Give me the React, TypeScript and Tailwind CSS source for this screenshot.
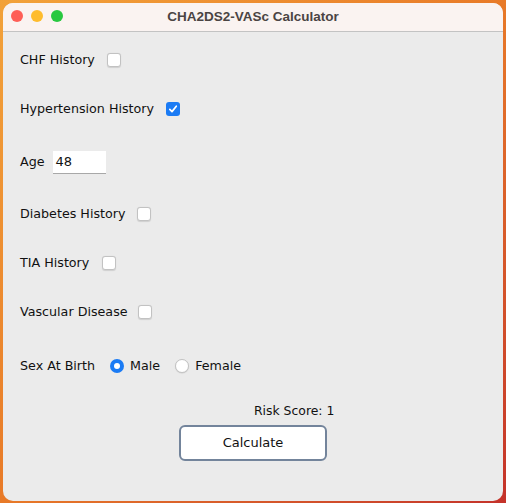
import React from "react";

function Checkbox({ checked }: { checked?: boolean }) {
  if (checked) {
    return (
      <div className="w-[14px] h-[14px] rounded-[3px] bg-[#1b7bf4] flex items-center justify-center shrink-0">
        <svg width="10" height="10" viewBox="0 0 10 10">
          <path d="M1.8 5.3 L4 7.6 L8.3 2.2" fill="none" stroke="white" strokeWidth="1.7" strokeLinecap="round" strokeLinejoin="round" />
        </svg>
      </div>
    );
  }
  return <div className="w-[14px] h-[14px] rounded-[3px] bg-white border border-[#c2c2c2] shadow-[0_0.5px_1px_rgba(0,0,0,0.12)] shrink-0" />;
}

function Radio({ checked }: { checked?: boolean }) {
  if (checked) {
    return (
      <div className="w-[14px] h-[14px] rounded-full bg-[#1b7bf4] flex items-center justify-center shrink-0">
        <div className="w-[6px] h-[6px] rounded-full bg-white" />
      </div>
    );
  }
  return <div className="w-[14px] h-[14px] rounded-full bg-white border border-[#c2c2c2] shadow-[0_0.5px_1px_rgba(0,0,0,0.12)] shrink-0" />;
}

export default function App() {
  const font = { fontFamily: '"DejaVu Sans", sans-serif' };
  return (
    <div className="w-[506px] h-[503px] bg-gradient-to-br from-[#f2a23a] via-[#e87a28] to-[#c4322a] p-[3px] pb-[2px]">
      <div className="w-[500px] h-[498px] rounded-[10px] overflow-hidden bg-[#ebebeb] flex flex-col">
        <div className="h-[29px] bg-[#faf3f1] border-b border-[#c3c3c3] relative flex items-center justify-center shrink-0">
          <div className="absolute left-[8px] top-[7px] flex gap-[8px]">
            <div className="w-[12px] h-[12px] rounded-full bg-[#fe5f57]" />
            <div className="w-[12px] h-[12px] rounded-full bg-[#febc2e]" />
            <div className="w-[12px] h-[12px] rounded-full bg-[#28c840]" />
          </div>
          <span
            className="text-[13.5px] font-bold text-[#4a4443]"
            style={{ fontFamily: '"Liberation Sans", Arial, sans-serif' }}
          >
            CHA2DS2-VASc Calculator
          </span>
        </div>
        <div className="flex flex-col pl-[17px] pt-[16px] text-[12.7px] text-[#111111]" style={font}>
          <div className="h-[24px] flex items-center gap-[12px]">
            <span>CHF History</span>
            <Checkbox />
          </div>
          <div className="h-[24px] mt-[25px] flex items-center gap-[12px]">
            <span>Hypertension History</span>
            <Checkbox checked />
          </div>
          <div className="h-[24px] mt-[29px] flex items-center gap-[8px]">
            <span>Age</span>
            <div className="w-[53px] h-[23px] bg-white border-b border-[#a8a8a8] flex items-center pl-[3px] text-[13px]">
              48
            </div>
          </div>
          <div className="h-[24px] mt-[28px] flex items-center gap-[11px]">
            <span>Diabetes History</span>
            <Checkbox />
          </div>
          <div className="h-[24px] mt-[25px] flex items-center gap-[13px]">
            <span>TIA History</span>
            <Checkbox />
          </div>
          <div className="h-[24px] mt-[25px] flex items-center gap-[10px]">
            <span>Vascular Disease</span>
            <Checkbox />
          </div>
          <div className="h-[24px] mt-[30px] flex items-center">
            <span>Sex At Birth</span>
            <div className="ml-[15px] flex items-center gap-[6px]">
              <Radio checked />
              <span>Male</span>
            </div>
            <div className="ml-[15px] flex items-center gap-[6px]">
              <Radio />
              <span>Female</span>
            </div>
          </div>
          <div className="h-[18px] mt-[24px] flex items-center pl-[234px]">
            <span className="text-[12.4px]">Risk Score: 1</span>
          </div>
          <div className="mt-[5px] pl-[159px]">
            <div className="w-[148px] h-[36px] rounded-[6px] border-2 border-[#73849b] bg-white flex items-center justify-center text-[13px]">
              Calculate
            </div>
          </div>
        </div>
      </div>
    </div>
  );
}
